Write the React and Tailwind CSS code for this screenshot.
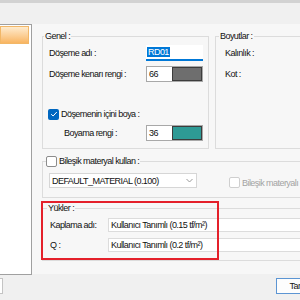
import React from "react";

// --- CASES À COCHER ---
const CheckBox = ({ checked = false, disabled = false }) => {
  if (checked) {
    return (
      <span className="w-[11px] h-[11px] rounded-[2px] bg-[#0067c0] flex items-center justify-center shrink-0">
        <svg width="8" height="8" viewBox="0 0 8 8">
          <path d="M1.2 4.2 L3.1 6 L6.8 2" fill="none" stroke="#fff" strokeWidth="1" />
        </svg>
      </span>
    );
  }
  return (
    <span
      className={`w-[11px] h-[11px] rounded-[2px] bg-white border shrink-0 ${
        disabled ? "border-[#cfcfcf]" : "border-[#8c8c8c]"
      }`}
    ></span>
  );
};

// --- CHAMP COULEUR ---
const ColorField = ({ value, color }) => (
  <div className="flex w-[57px] h-[16px] border border-[#a8a8a8] bg-white">
    <span className="w-[25px] pl-[2px] flex items-center">{value}</span>
    <span className="flex-1 border border-[#3c3c3c]" style={{ backgroundColor: color }}></span>
  </div>
);

const Row = ({ label, children, labelClass = "w-[97px]", className = "" }) => (
  <div className={`flex items-center h-[16px] ${className}`}>
    <span className={`shrink-0 ${labelClass}`}>{label}</span>
    {children}
  </div>
);

export default function App() {
  return (
    <div
      className="relative w-[300px] h-[300px] overflow-hidden bg-[#f0f0f0] text-[9px] leading-[10px] tracking-[-0.55px] text-[#111]"
      style={{ fontFamily: '"Liberation Sans", Arial, sans-serif' }}
    >
      {/* barre du haut */}
      <div className="h-[3px] bg-[#d2d2d2]"></div>
      <div className="h-[21px]"></div>

      <div className="flex h-[251px]">
        {/* liste de gauche */}
        <div className="w-[32px] shrink-0 bg-white border-t border-r border-b border-[#a0a0a0] pt-[1px]">
          <div className="w-[29px] h-[18px] bg-gradient-to-b from-[#feebcd] to-[#f8b560] border border-[#f2b767]"></div>
        </div>

        {/* panneau de droite */}
        <div className="flex-1 bg-[#f7f7f7] overflow-hidden pt-[7px] pl-[10px] h-[250px]">
          <div className="flex gap-[6px]">
            <fieldset className="w-[167px] h-[118px] border border-[#dcdcdc] shrink-0">
              <legend className="ml-[1px] px-[1px] h-[10px]">Genel :</legend>
              <div className="pt-[4px] pl-[6px]">
                <Row label="Döşeme adı :">
                  <div className="w-[57px] h-[16px] bg-white border-b-2 border-[#0078d7] flex items-center pl-[1px]">
                    <span className="bg-[#0078d7] text-white px-[1px] h-[10px]">RD01</span>
                  </div>
                </Row>
                <Row label="Döşeme kenarı rengi :" className="mt-[5px]">
                  <ColorField value="66" color="#6e6e6e" />
                </Row>
                <div className="flex items-center gap-[2px] h-[16px] mt-[24px] -ml-[1px]">
                  <CheckBox checked />
                  <span>Döşemenin içini boya :</span>
                </div>
                <Row label="Boyama rengi :" labelClass="w-[82px] pl-[15px] box-content" className="mt-[3px]">
                  <ColorField value="36" color="#2e9a95" />
                </Row>
              </div>
            </fieldset>

            <fieldset className="w-[110px] h-[118px] border border-[#dcdcdc] shrink-0">
              <legend className="ml-[3px] px-[1px] h-[10px]">Boyutlar :</legend>
              <div className="pt-[4px] pl-[9px]">
                <Row label="Kalınlık :" />
                <Row label="Kot :" className="mt-[5px]" />
              </div>
            </fieldset>
          </div>

          <fieldset className="mt-[6px] w-[290px] h-[43px] border border-[#dcdcdc]">
            <legend className="ml-[3px] pr-[1px] h-[12px]">
              <span className="flex items-center gap-[2px] h-[12px]">
                <CheckBox />
                <span>Bileşik materyal kullan :</span>
              </span>
            </legend>
            <div className="flex items-start pt-[6px] pl-[6px]">
              <div className="w-[148px] h-[15px] bg-white border border-[#d6d6d6] flex items-center justify-between pl-[2px] pr-[3px]">
                <span>DEFAULT_MATERIAL (0.100)</span>
                <svg width="7" height="5" viewBox="0 0 7 5">
                  <path d="M0.5 1 L3.5 4 L6.5 1" fill="none" stroke="#9a9a9a" strokeWidth="1" />
                </svg>
              </div>
              <div className="flex items-center gap-[2px] ml-[32px] mt-[4px] text-[#a3a3a3]">
                <CheckBox disabled />
                <span className="whitespace-nowrap">Bileşik materyalı</span>
              </div>
            </div>
          </fieldset>

          <fieldset className="mt-[5px] w-[290px] h-[58px] border border-[#dcdcdc]">
            <legend className="ml-[4px] px-[1px] h-[10px]">Yükler :</legend>
            <div className="pt-[5px] pl-[7px]">
              <div className="flex items-center h-[14px]">
                <span className="w-[58px] shrink-0">Kaplama adı:</span>
                <div className="w-[200px] h-[14px] bg-white border border-[#dcdcdc] flex items-center pl-[2px] whitespace-nowrap">
                  Kullanıcı Tanımlı (0.15 tf/m²)
                </div>
              </div>
              <div className="flex items-center h-[14px] mt-[6px]">
                <span className="w-[58px] shrink-0">Q :</span>
                <div className="w-[200px] h-[14px] bg-white border border-[#dcdcdc] flex items-center pl-[2px] whitespace-nowrap">
                  Kullanıcı Tanımlı (0.2 tf/m²)
                </div>
              </div>
            </div>
          </fieldset>
        </div>
      </div>

      {/* barre des boutons */}
      <div className="flex justify-between pt-[3px]">
        <div className="-ml-[51px] w-[54px] h-[16px] bg-white border border-[#c4c4c4]"></div>
        <div className="w-[54px] h-[16px] -mr-[30px] bg-[#fdfdfd] border border-[#5c95d3] flex items-center justify-center">
          Tamam
        </div>
      </div>

      {/* cadre rouge d'annotation */}
      <div className="absolute left-[41px] top-[201px] w-[178px] h-[59px] border-2 border-[#e4202a] pointer-events-none"></div>
    </div>
  );
}
